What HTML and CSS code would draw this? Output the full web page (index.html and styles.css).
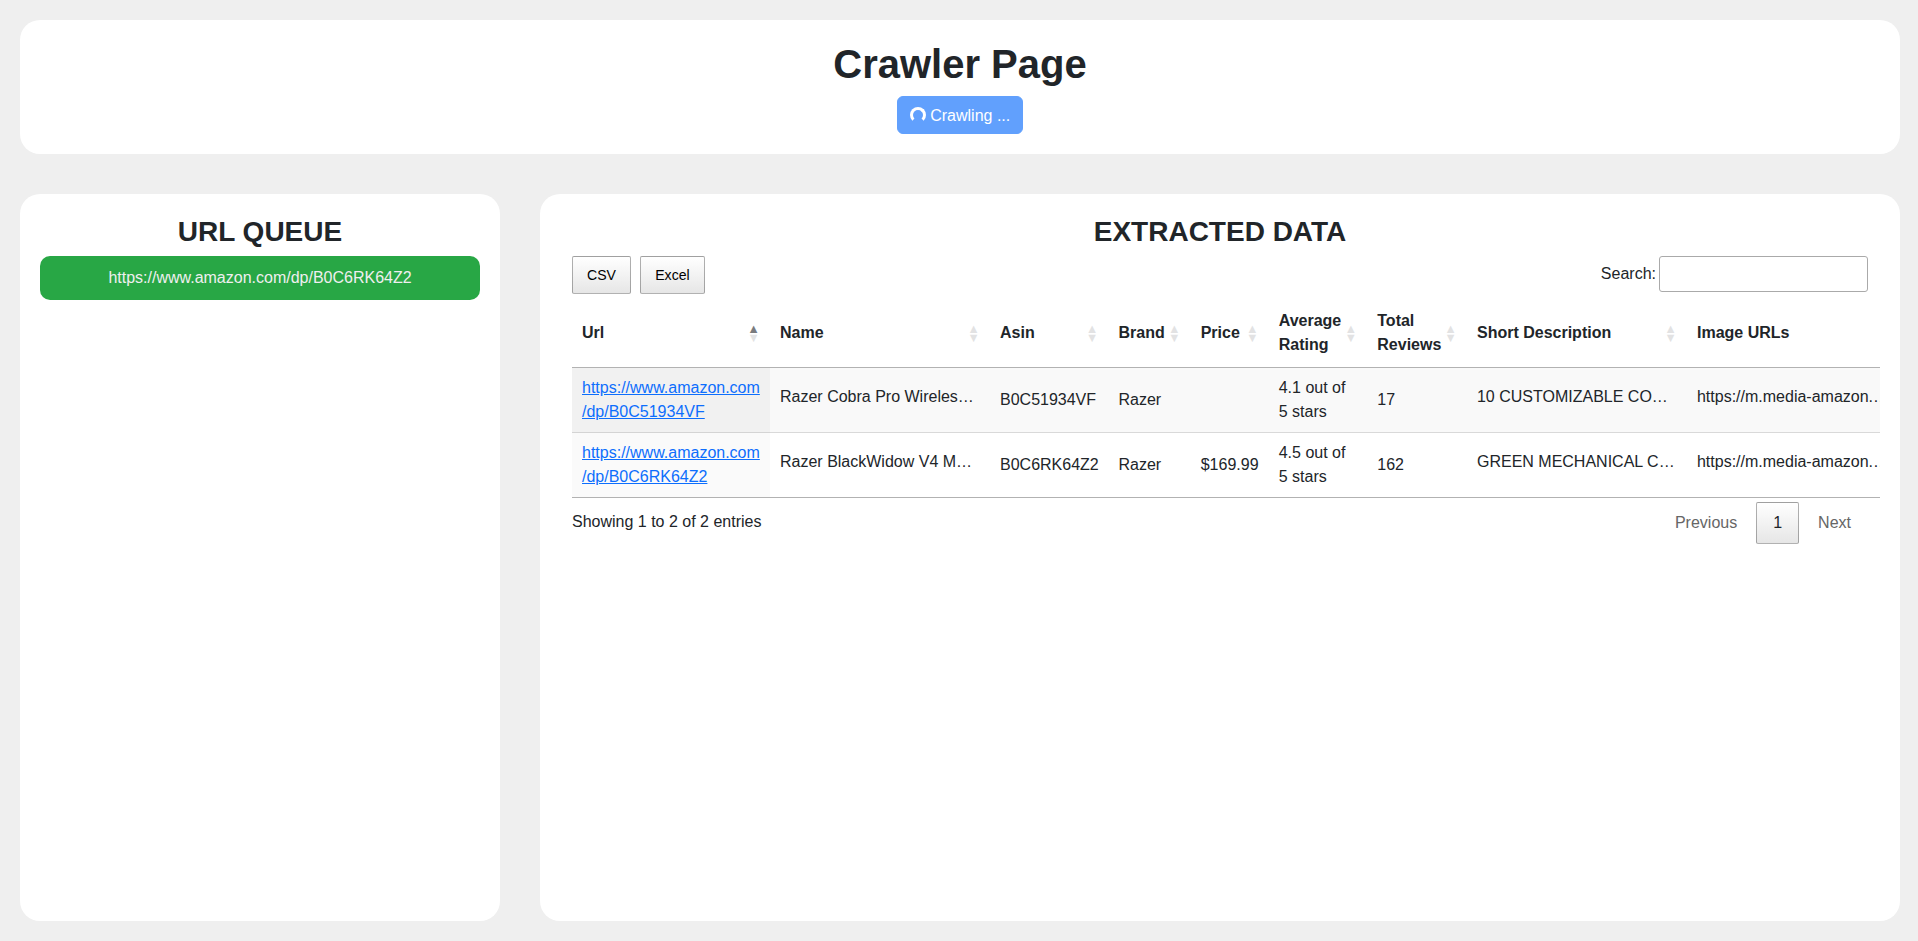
FILE: index.html
```html
<!DOCTYPE html>
<html lang="en">
<head>
<meta charset="utf-8">
<title>Crawler Page</title>
<link rel="stylesheet" href="styles.css">
</head>
<body>
<header class="card header">
  <h1>Crawler Page</h1>
  <button class="btn" disabled><span class="spinner"></span> Crawling ...</button>
</header>
<main class="main">
  <section class="card queue">
    <h2>URL QUEUE</h2>
    <div class="queue-item">https://www.amazon.com/dp/B0C6RK64Z2</div>
  </section>
  <section class="card data">
    <h2>EXTRACTED DATA</h2>
    <div class="data-body">
      <div class="toolbar">
        <div class="exports">
          <button class="dt-button">CSV</button>
          <button class="dt-button excel">Excel</button>
        </div>
        <label class="search">Search:<input type="search"></label>
      </div>
      <table class="table">
        <colgroup>
          <col class="c-url"><col class="c-wide"><col class="c-asin"><col class="c-brand"><col class="c-price"><col class="c-rating"><col class="c-reviews"><col class="c-wide"><col class="c-wide">
        </colgroup>
        <thead>
          <tr>
            <th class="asc">Url</th><th>Name</th><th>Asin</th><th>Brand</th><th>Price</th><th>Average Rating</th><th>Total Reviews</th><th>Short Description</th><th>Image URLs</th>
          </tr>
        </thead>
        <tbody>
          <tr class="odd">
            <td><a href="#">https://www.amazon.com<wbr>/dp/B0C51934VF</a></td>
            <td><span class="clip">Razer Cobra Pro Wireles…</span></td>
            <td>B0C51934VF</td><td>Razer</td><td></td><td>4.1 out of 5 stars</td><td>17</td>
            <td><span class="clip">10 CUSTOMIZABLE CO…</span></td>
            <td><span class="clip">https://m.media-amazon.…</span></td>
          </tr>
          <tr>
            <td><a href="#">https://www.amazon.com<wbr>/dp/B0C6RK64Z2</a></td>
            <td><span class="clip">Razer BlackWidow V4 M…</span></td>
            <td>B0C6RK64Z2</td><td>Razer</td><td>$169.99</td><td>4.5 out of 5 stars</td><td>162</td>
            <td><span class="clip">GREEN MECHANICAL C…</span></td>
            <td><span class="clip">https://m.media-amazon.…</span></td>
          </tr>
        </tbody>
      </table>
      <div class="footer">
        <div class="info">Showing 1 to 2 of 2 entries</div>
        <nav class="pages">
          <a class="page disabled">Previous</a><a class="page current">1</a><a class="page disabled">Next</a>
        </nav>
      </div>
    </div>
  </section>
</main>
</body>
</html>
```
FILE: styles.css
```css
*, *::before, *::after { box-sizing: border-box; }

body {
  margin: 0;
  height: 100vh;
  padding: 20px 18px 20px 20px;
  display: flex;
  flex-direction: column;
  gap: 40px;
  overflow: hidden;
  background: #efefef;
  color: #212529;
  font: 16px/1.5 "Liberation Sans", Arial, sans-serif;
}

.card { background: #fff; border-radius: 20px; padding: 20px; }

h1, h2 { margin: 0 0 8px; font-weight: 700; line-height: 1.2; text-align: center; }
h1 { font-size: 40px; }
h2 { font-size: 28px; line-height: 34px; padding-top: 1px; margin-bottom: 7px; }

.header { text-align: center; height: 134px; flex: none; }

.btn {
  display: inline-block;
  padding: 7px 12px 5px;
  border: 1px solid #0d6efd;
  border-radius: 6px;
  background: #0d6efd;
  color: #fff;
  font: inherit;
  opacity: .65;
  vertical-align: middle;
}

.spinner {
  display: inline-block;
  width: 16px;
  height: 16px;
  vertical-align: -2px;
  border: 3.2px solid #fff;
  border-right-color: transparent;
  border-radius: 50%;
  transform: rotate(90deg);
}

.main { flex: 1; min-height: 0; display: flex; gap: 40px; }
.queue { width: 480px; flex: none; }
.data { flex: 1; min-width: 0; }

.queue-item {
  padding: 10px;
  border-radius: 10px;
  background: #28a745;
  color: #efefef;
  text-align: center;
}

.data-body { padding: 0 12px; overflow: hidden; }

.toolbar { display: flex; justify-content: space-between; align-items: flex-start; height: 43px; }
.exports { display: flex; gap: 9px; }

.dt-button {
  height: 38px;
  padding: 7px 14px;
  border: 1px solid rgba(0, 0, 0, .3);
  border-radius: 2px;
  background: linear-gradient(to bottom, #fff 0%, #e6e6e6 100%);
  color: #000;
  font: 14.08px/22px "Liberation Sans", Arial, sans-serif;
}
.dt-button.excel { width: 65px; }

.search input {
  width: 209px;
  height: 36px;
  margin-left: 3px;
  padding: 5px;
  border: 1px solid #aaa;
  border-radius: 3px;
  background: transparent;
  font: inherit;
}

.table {
  table-layout: fixed;
  width: 1335px;
  border-collapse: separate;
  border-spacing: 0;
  border-bottom: 1px solid rgba(0, 0, 0, .3);
}
.c-url { width: 198px; }
.c-wide { width: 220px; }
.c-asin { width: 118.5px; }
.c-brand { width: 82.2px; }
.c-price { width: 78px; }
.c-rating { width: 98.6px; }
.c-reviews { width: 99.7px; }

th {
  position: relative;
  padding: 10px 26px 10px 10px;
  border-bottom: 1px solid rgba(0, 0, 0, .3);
  text-align: left;
  font-weight: 700;
}
th:nth-child(6), th:nth-child(7) { padding-right: 20px; }
th::before, th::after {
  position: absolute;
  right: 10px;
  font-size: 12.8px;
  line-height: 9px;
  opacity: .125;
}
th::before { content: "▲"; bottom: 50%; }
th::after { content: "▼"; top: 50%; }
th.asc::before { opacity: .6; }

td { height: 64px; padding: 8px 10px; vertical-align: middle; }
tbody tr + tr td { height: 65px; border-top: 1px solid rgba(0, 0, 0, .15); }
.odd td { background: #f9f9f9; }
td:first-child { background: #fafafa; }
.odd td:first-child { background: #f1f1f1; }
td a { color: #0d6efd; text-decoration: underline; }

.clip {
  display: inline-block;
  width: 200px;
  margin-top: 1px;
  overflow: hidden;
  text-overflow: ellipsis;
  white-space: nowrap;
}

.footer { display: flex; justify-content: space-between; }
.info { padding-top: 12px; }
.pages { display: flex; gap: 2px; padding-top: 4px; }
.page { padding: 8px 16px; border: 1px solid transparent; border-radius: 2px; }
.page.disabled { color: #666; }
.page.current {
  border-color: rgba(0, 0, 0, .3);
  background: linear-gradient(to bottom, #fff 0%, #e6e6e6 100%);
}
```
